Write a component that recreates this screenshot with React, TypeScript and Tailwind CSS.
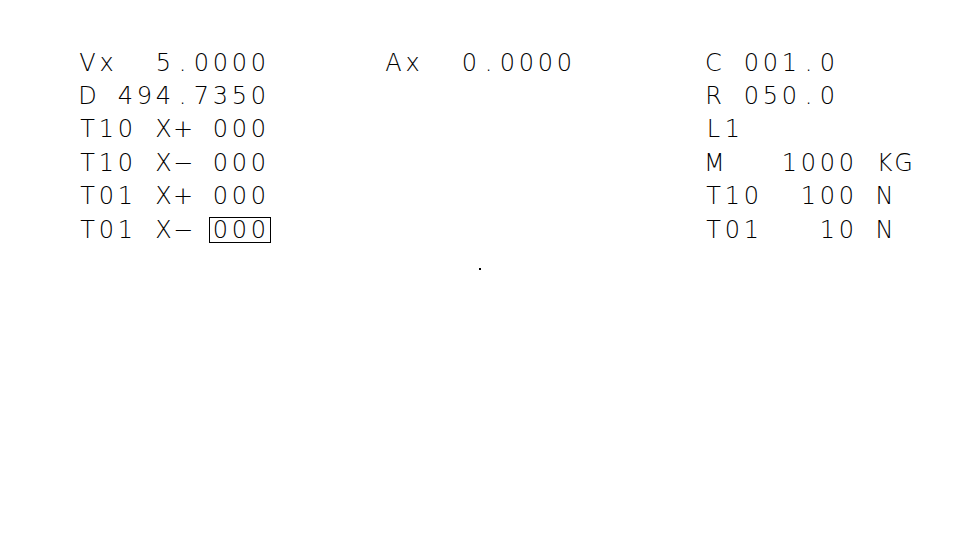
import React from "react";

const Cells = ({ text, boxFrom }: { text: string; boxFrom?: number }) => (
  <div className="relative flex h-[33.4px] items-center">
    {text.split("").map((c, i) => (
      <span key={i} className="inline-block w-[19px] text-center">
        {c === " " ? "\u00a0" : c === "-" ? "\u2212" : c}
      </span>
    ))}
    {boxFrom !== undefined && (
      <div
        className="absolute top-[4px] h-[26px] w-[62px] border border-black"
        style={{ left: boxFrom * 19 - 2 }}
      />
    )}
  </div>
);

const Column = ({ rows, className, box }: { rows: string[]; className: string; box?: number }) => (
  <div className={className}>
    {rows.map((r, i) => (
      <Cells key={i} text={r} boxFrom={box !== undefined && i === rows.length - 1 ? box : undefined} />
    ))}
  </div>
);

export default function App() {
  return (
    <div
      className="relative h-[540px] w-[960px] overflow-hidden bg-white text-black"
      style={{ fontFamily: "'DejaVu Sans', sans-serif", fontWeight: 200, fontSize: 24 }}
    >
      <div className="flex pt-[46px] pl-[78px]">
        <Column
          className="w-[306px]"
          rows={["Vx  5.0000", "D 494.7350", "T10 X+ 000", "T10 X- 000", "T01 X+ 000", "T01 X- 000"]}
          box={7}
        />
        <Column className="w-[320px]" rows={["Ax  0.0000"]} />
        <Column
          className="w-[240px]"
          rows={["C 001.0", "R 050.0", "L1", "M   1000 KG", "T10  100 N", "T01   10 N"]}
        />
      </div>
      <div className="absolute left-[479px] top-[268px] h-[2px] w-[2px] bg-black" />
    </div>
  );
}
